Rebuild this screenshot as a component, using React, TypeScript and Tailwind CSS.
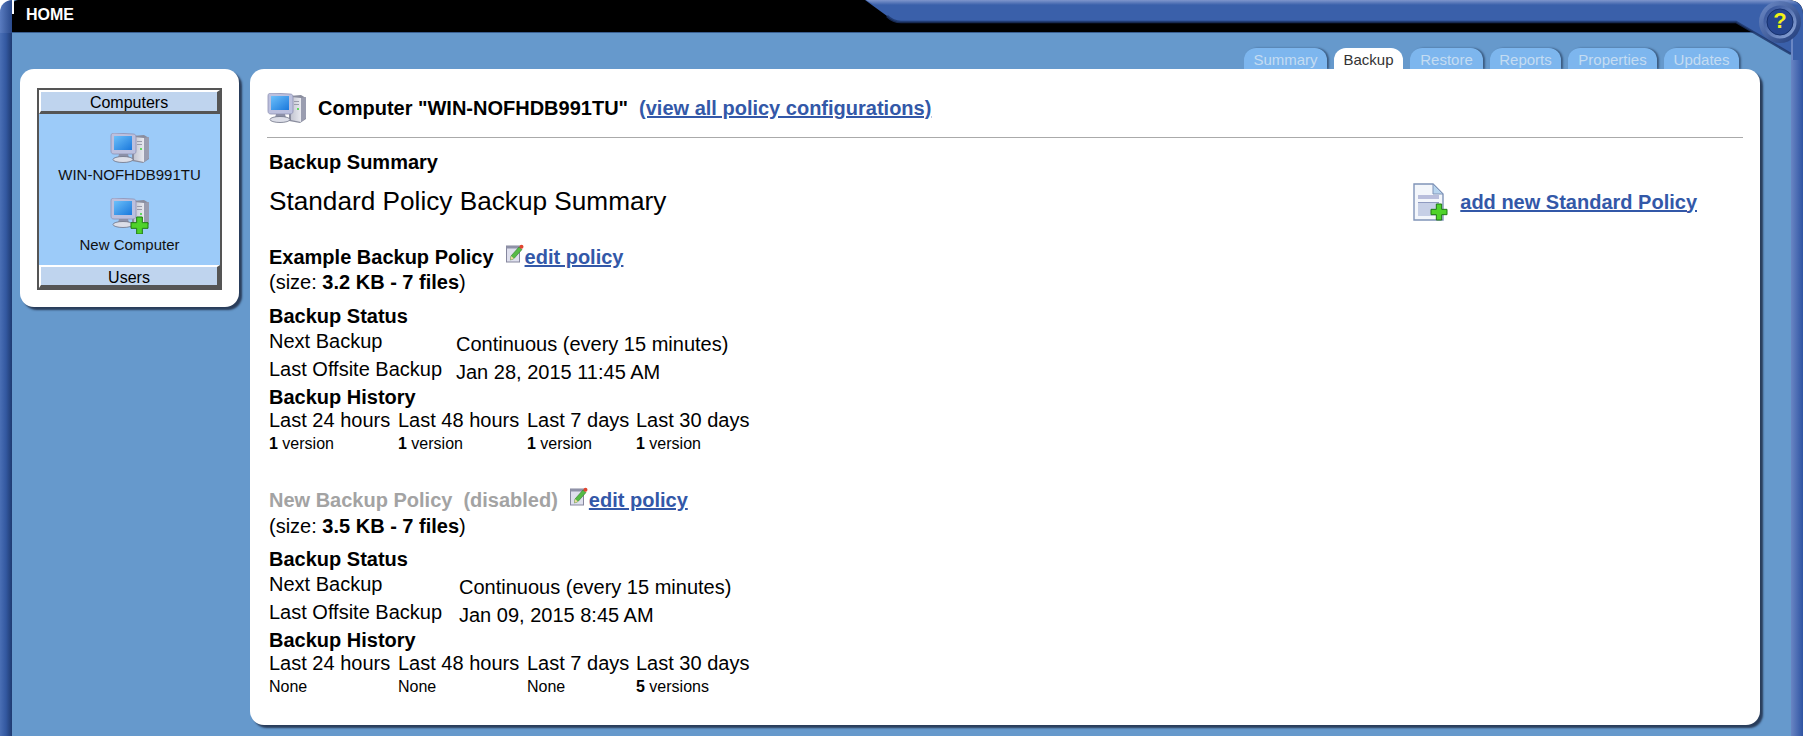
import type { ReactNode } from 'react';

const FONT = "font-['Liberation_Sans',Arial,sans-serif]";

function PlusBadge({ x, y, s }: { x: number; y: number; s: number }) {
  const t = s / 3;
  return (
    <path
      d={`M${x + t} ${y}h${t}v${t}h${t}v${t}h${-t}v${t}h${-t}v${-t}h${-t}v${-t}h${t}z`}
      fill="#4fd32a"
      stroke="#1f7a12"
      strokeWidth="1"
    />
  );
}

function ComputerIcon({ plus = false, id, className }: { plus?: boolean; id: string; className?: string }) {
  return (
    <svg viewBox={plus ? '0 0 40 36' : '0 0 40 31'} className={className}>
      <defs>
        <linearGradient id={`${id}-screen`} x1="0" y1="0" x2="1" y2="1">
          <stop offset="0" stopColor="#6cc0fa" />
          <stop offset="1" stopColor="#1a78dc" />
        </linearGradient>
        <linearGradient id={`${id}-case`} x1="0" y1="0" x2="1" y2="0">
          <stop offset="0" stopColor="#c4c6d2" />
          <stop offset="1" stopColor="#e8e9ef" />
        </linearGradient>
      </defs>
      <g className="blur-[0.3px]">
        {/* tower */}
        <path d="M22 3l12-1 5 3v21l-6 4-11-2z" fill="#8a8d9e" />
        <path d="M24 4l10 1v24l-10-2z" fill={`url(#${id}-case)`} />
        <path d="M34 5l5-1v21l-5 4z" fill="#9a9db0" />
        <rect x="27" y="8" width="5" height="1" fill="#9a9cab" />
        <rect x="27" y="11" width="5" height="1" fill="#9a9cab" />
        <rect x="30" y="15" width="2" height="2" fill="#62d862" />
        {/* monitor */}
        <path d="M1 3c0-2 1-3 3-3l19 1c2 0 3 1 3 3v14c0 2-1 3-3 3H4c-2 0-3-1-3-3z" fill="#bcc0de" stroke="#8d90b2" strokeWidth="0.8" />
        <rect x="4" y="3" width="18" height="14" fill={`url(#${id}-screen)`} />
        <path d="M9 21h9l1 4H8z" fill="#8c90a8" />
        <ellipse cx="13" cy="26.500" rx="10" ry="3" fill="#dcdee8" stroke="#6f7486" strokeWidth="0.8" />
      </g>
      {plus && <PlusBadge x={21} y={19} s={17} />}
    </svg>
  );
}

function DocPlusIcon({ className }: { className?: string }) {
  return (
    <svg viewBox="0 0 35 38" className={className}>
      <path d="M1 1h19l10 10v26H1z" fill="#f3f6fb" stroke="#8094b8" strokeWidth="1.400" />
      <path d="M20 1v10h10z" fill="#b7d4ee" stroke="#8094b8" strokeWidth="1" />
      <rect x="5" y="12" width="21" height="4" fill="#b9bedc" />
      <rect x="5" y="19" width="21" height="14" fill="#c6cfe6" />
      <rect x="5" y="19" width="21" height="1" fill="#8f9ac0" />
      <PlusBadge x={18} y={21} s={16} />
    </svg>
  );
}

function EditIcon({ className }: { className?: string }) {
  return (
    <svg viewBox="0 0 18 19" className={className}>
      <rect x="0.500" y="2" width="13" height="16" fill="#dfe0ee" stroke="#85879e" />
      <rect x="0.500" y="2" width="13" height="2.500" fill="#8f92a8" />
      <path d="M5 12L13 3l3 2.500-8 9-3.500 1.500z" fill="#55bb45" stroke="#2f7a2a" strokeWidth="0.600" />
      <circle cx="15.500" cy="2.800" r="2" fill="#e0452f" />
      <path d="M5 12l-0.500 4 3.500-1.500z" fill="#f0d9a0" />
    </svg>
  );
}

// Window frame corner + help button, sits over the page chrome
function TopRightChrome() {
  return (
    <>
      <svg width="938" height="60" viewBox="0 0 938 60" className="absolute top-0 right-0 pointer-events-none">
        <defs>
          <linearGradient id="frame-top" x1="0" y1="0" x2="0" y2="1">
            <stop offset="0" stopColor="#7f96cc" />
            <stop offset="1" stopColor="#3a60aa" />
          </linearGradient>
          <linearGradient id="help-ring" x1="0" y1="0" x2="1" y2="1">
            <stop offset="0" stopColor="#2b4a92" />
            <stop offset="1" stopColor="#8ea7d8" />
          </linearGradient>
          <linearGradient id="help-rim" x1="0" y1="0" x2="1" y2="1">
            <stop offset="0" stopColor="#6f8cc8" />
            <stop offset="1" stopColor="#1f3a78" />
          </linearGradient>
        </defs>
        <path d="M922 0Q938 0 938 14V0z" fill="#fff" />
        <path d="M0 0L22 16Q28 22 36 22H871L926 54V60H938V14Q938 0 922 0z" fill="#3a60aa" />
        <path d="M22 16Q28 22 36 22H871L926 54" fill="none" stroke="#1d3468" strokeWidth="2.500" opacity="0.8" />
        <path d="M1 0H922Q930 0 934 5H9z" fill="url(#frame-top)" />
        <rect x="926" y="14" width="2" height="46" fill="#6a86c4" />
        <circle cx="915" cy="22" r="21" fill="url(#help-rim)" />
        <circle cx="915" cy="22" r="16.500" fill="url(#help-ring)" />
        <circle cx="915" cy="22" r="13" fill="#27468f" stroke="#16306c" />
      </svg>
      <div className="absolute top-[8px] left-[1770px] w-[20px] h-[26px] flex items-center justify-center text-[22px] font-bold text-[#f2f214] leading-none">
        ?
      </div>
    </>
  );
}

function PanelHeader({ children, bottom = false }: { children: ReactNode; bottom?: boolean }) {
  return (
    <div
      className={`border-t-2 border-l-2 border-t-white border-l-white border-b-[3px] border-r-[3px] border-b-[#555] border-r-[#555] bg-[#bfd4ee] flex items-center justify-center text-[16px] text-black ${
        bottom ? 'h-[23px] pt-[3px]' : 'h-[24px] pt-[2px]'
      }`}
    >
      {children}
    </div>
  );
}

function Sidebar() {
  return (
    <aside className="w-[219px] h-[238px] mt-[36px] bg-white rounded-[14px] shadow-[3px_3px_2px_rgba(30,45,70,0.85)] pt-[19px] px-[17px] shrink-0">
      <div className="h-[202px] border-2 border-[#555] flex flex-col bg-[#9ccbf9]">
        <PanelHeader>Computers</PanelHeader>
        <div className="flex-1 flex flex-col items-center pt-[19px]">
          <ComputerIcon id="side-pc" className="w-[40px] h-[31px]" />
          <span className="text-[15px] leading-[17px] mt-[2px] text-[#111]">WIN-NOFHDB991TU</span>
          <ComputerIcon id="side-new" plus className="w-[40px] h-[36px] mt-[15px]" />
          <span className="text-[15px] leading-[17px] mt-[2px] text-[#111]">New Computer</span>
        </div>
        <PanelHeader bottom>Users</PanelHeader>
      </div>
    </aside>
  );
}

const TABS = [
  { label: 'Summary', w: 'w-[83px]' },
  { label: 'Backup', w: 'w-[69px]', active: true },
  { label: 'Restore', w: 'w-[73px]' },
  { label: 'Reports', w: 'w-[71px]' },
  { label: 'Properties', w: 'w-[89px]' },
  { label: 'Updates', w: 'w-[75px]' },
];

function Tabs() {
  return (
    <div className="flex justify-end gap-[7px] h-[21px] mr-[21px]">
      {TABS.map((t) => (
        <div
          key={t.label}
          className={`${t.w} rounded-t-[12px] flex items-center justify-center text-[15px] pt-[3px] ${
            t.active ? 'bg-white text-[#333]' : 'bg-[#7db6ee] text-[#c4dcf2] shadow-[2px_0_2px_rgba(30,50,80,0.6)]'
          }`}
        >
          {t.label}
        </div>
      ))}
    </div>
  );
}

type Policy = {
  name: string;
  disabled?: boolean;
  size: string;
  last: string;
  valueW: string;
  history: ReactNode[];
};

const version = (
  <>
    <b>1</b> version
  </>
);

const POLICIES: Policy[] = [
  {
    name: 'Example Backup Policy',
    size: '3.2 KB - 7 files',
    last: 'Jan 28, 2015 11:45 AM',
    valueW: 'w-[187px]',
    history: [version, version, version, version],
  },
  {
    name: 'New Backup Policy',
    disabled: true,
    size: '3.5 KB - 7 files',
    last: 'Jan 09, 2015 8:45 AM',
    valueW: 'w-[190px]',
    history: ['None', 'None', 'None', <><b>5</b> versions</>],
  },
];

function PolicyBlock({ p }: { p: Policy }) {
  return (
    <section className="mb-[32px]">
      <div className="flex items-center h-[26px] text-[20px] font-bold">
        <span className={p.disabled ? 'text-[#a3a3a3]' : 'text-black'}>
          {p.name}
          {p.disabled && <span className="ml-[11px]">(disabled)</span>}
        </span>
        <EditIcon className="w-[18px] h-[19px] ml-[12px] mb-[7px]" />
        <a className="text-[#3358a8] underline ml-[1px]">edit policy</a>
      </div>
      <div className={`text-[20px] leading-[25px] h-[25px] ${p.disabled ? 'mt-[1px] mb-[9px]' : 'mb-[10px]'}`}>
        (size: <b>{p.size}</b>)
      </div>
      <div className="text-[20px] font-bold leading-[22px]">Backup Status</div>
      <div className="flex h-[27px] mt-[4px] text-[20px] leading-[27px]">
        <span className={`${p.valueW} -mt-[3px]`}>Next Backup</span>
        <span>Continuous (every 15 minutes)</span>
      </div>
      <div className="flex h-[28px] text-[20px] leading-[28px]">
        <span className={`${p.valueW} -mt-[3px]`}>Last Offsite Backup</span>
        <span>{p.last}</span>
      </div>
      <div className="text-[20px] font-bold leading-[22px]">Backup History</div>
      <div className="grid grid-cols-[129px_129px_109px_120px] text-[20px] leading-[24px]">
        {['Last 24 hours', 'Last 48 hours', 'Last 7 days', 'Last 30 days'].map((h) => (
          <span key={h}>{h}</span>
        ))}
      </div>
      <div className="grid grid-cols-[129px_129px_109px_120px] text-[16px] leading-[22px] pt-[1px]">
        {p.history.map((h, i) => (
          <span key={i}>{h}</span>
        ))}
      </div>
    </section>
  );
}

function MainPanel() {
  return (
    <div className="flex-1 flex flex-col pt-[15px]">
      <Tabs />
      <main className="h-[656px] bg-white rounded-[14px] shadow-[3px_3px_2px_rgba(30,45,70,0.85)] px-[17px] text-black">
        <div className="flex items-center h-[69px] border-b border-[#aaa] pt-[10px]">
          <ComputerIcon id="main-pc" className="w-[40px] h-[31px] mr-[11px] mt-[1px]" />
          <span className="text-[20px] font-bold">Computer "WIN-NOFHDB991TU"</span>
          <a className="text-[20px] font-bold text-[#3358a8] underline ml-[11px]">(view all policy configurations)</a>
        </div>
        <div className="pl-[2px]">
          <div className="text-[20px] font-bold leading-[22px] mt-[13px]">Backup Summary</div>
          <div className="flex items-center justify-between h-[40px] mt-[9px] mb-[22px] pr-[46px]">
            <span className="text-[26.2px]">Standard Policy Backup Summary</span>
            <span className="flex items-center gap-[12px] -mt-[1px]">
              <DocPlusIcon className="w-[35px] h-[38px]" />
              <a className="text-[20px] font-bold text-[#3358a8] underline">add new Standard Policy</a>
            </span>
          </div>
          {POLICIES.map((p) => (
            <PolicyBlock key={p.name} p={p} />
          ))}
        </div>
      </main>
    </div>
  );
}

export default function App() {
  return (
    <div className={`${FONT} relative h-[736px] flex flex-col bg-[#6699cc] overflow-hidden`}>
      <header className="h-[33px] shrink-0 bg-black rounded-tl-[6px] ml-[12px] text-white font-bold text-[16px] pl-[14px] pt-[6px] leading-[18px] border-b border-[#3a5f90]">
        HOME
      </header>
      <TopRightChrome />
      <div className="absolute top-0 left-0 w-[14px] h-[14px] bg-white" />
      <div className="absolute top-0 left-0 w-[12px] h-[33px] bg-gradient-to-r from-[#5a7cc0] to-[#2a4a8c] rounded-tl-[14px]" />
      <div className="flex-1 flex">
        <div className="w-[12px] bg-gradient-to-r from-[#4a6fb5] via-[#3358a0] to-[#1f3a70] shrink-0" />
        <div className="flex-1 flex gap-[11px] pl-[8px] pr-[31px]">
          <Sidebar />
          <MainPanel />
        </div>
        <div className="w-[12px] bg-gradient-to-r from-[#6a86c4] to-[#2f54a2] shrink-0" />
      </div>
    </div>
  );
}
